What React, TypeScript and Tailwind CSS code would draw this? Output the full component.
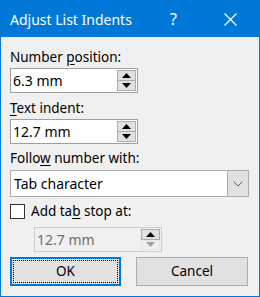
import type { ReactNode } from 'react'

function Arrow({ up, disabled }: { up?: boolean; disabled?: boolean }) {
  return (
    <svg width="9" height="5" viewBox="0 0 9 5">
      <path
        d={up ? 'M0 5 L4.5 0 L9 5 Z' : 'M0 0 L4.5 5 L9 0 Z'}
        fill={disabled ? '#a0a0a0' : '#000'}
      />
    </svg>
  )
}

function Spinner({ value, disabled }: { value: string; disabled?: boolean }) {
  return (
    <div
      className={`w-[128px] h-[25px] border flex ${
        disabled ? 'border-[#cccccc] bg-[#f0f0f0] text-[#6d6d6d]' : 'border-[#a0a0a0] bg-white text-black'
      }`}
    >
      <div className="flex-1 flex items-center pl-[2px] leading-none text-[14px]">{value}</div>
      <div className="w-[20px] flex flex-col p-[1px] pl-0">
        <div className="flex-1 flex items-center justify-center bg-[#e1e1e1] border border-[#adadad]">
          <Arrow up />
        </div>
        <div
          className={`flex-1 flex items-center justify-center ${
            disabled ? 'bg-[#f0f0f0] border border-[#e5e5e5]' : 'bg-[#e1e1e1] border border-[#adadad] border-t-0'
          }`}
        >
          <Arrow disabled={disabled} />
        </div>
      </div>
    </div>
  )
}

function Label({ children }: { children: ReactNode }) {
  return <div className="h-[20px] leading-[20px]">{children}</div>
}

export default function App() {
  return (
    <div className="w-[260px] h-[297px] border border-[#0078d7] bg-[#f0f0f0] flex flex-col text-[13.5px] text-black font-['Segoe_UI','Noto_Sans',sans-serif]">
      {/* Title bar */}
      <div className="h-[36px] bg-[#0078d7] flex items-center text-white shrink-0">
        <div className="flex-1 pl-[9px] text-[14px]">Adjust List Indents</div>
        <div className="w-[57px] h-full flex items-center justify-center text-[16px]">?</div>
        <div className="w-[57px] h-full flex items-center justify-center">
          <svg width="13" height="13" viewBox="0 0 13 13">
            <path d="M0.5 0.5 L12.5 12.5 M12.5 0.5 L0.5 12.5" stroke="#fff" strokeWidth="1.2" />
          </svg>
        </div>
      </div>

      {/* Body */}
      <div className="flex flex-col px-[9px]">
        <div className="mt-[10px]">
          <Label>
            Number <span className="underline underline-offset-2">p</span>osition:
          </Label>
        </div>
        <div className="mt-[1px]">
          <Spinner value="6.3 mm" />
        </div>

        <div className="mt-[5px]">
          <Label>
            <span className="underline underline-offset-2">T</span>ext indent:
          </Label>
        </div>
        <div className="mt-[1px]">
          <Spinner value="12.7 mm" />
        </div>

        <div className="mt-[4px]">
          <Label>
            Follo<span className="underline underline-offset-2">w</span> number with:
          </Label>
        </div>
        <div className="mt-[2px] w-[239px] h-[27px] border border-[#adadad] bg-white flex">
          <div className="flex-1 flex items-center pl-[3px] text-[14px]">Tab character</div>
          <div className="w-[21px] bg-[#e1e1e1] border-l border-[#adadad] flex items-center justify-center">
            <svg width="10" height="6" viewBox="0 0 10 6">
              <path d="M0.5 0.5 L5 5 L9.5 0.5" stroke="#606060" strokeWidth="1" fill="none" />
            </svg>
          </div>
        </div>

        <div className="mt-[7px] flex items-center h-[15px]">
          <div className="w-[15px] h-[15px] border border-[#333333] bg-white" />
          <div className="ml-[6px] leading-none">
            Add ta<span className="underline underline-offset-2">b</span> stop at:
          </div>
        </div>

        <div className="mt-[8px] ml-[24px]">
          <Spinner value="12.7 mm" disabled />
        </div>

        <div className="mt-[5px] flex gap-[15px]">
          <div className="w-[111px] h-[29px] border-2 border-[#0078d7] bg-[#e1e1e1] p-[1px]">
            <div className="w-full h-full border border-dotted border-black flex items-center justify-center">
              OK
            </div>
          </div>
          <div className="w-[112px] h-[29px] border border-[#adadad] bg-[#e1e1e1] flex items-center justify-center">
            Cancel
          </div>
        </div>
      </div>
    </div>
  )
}
